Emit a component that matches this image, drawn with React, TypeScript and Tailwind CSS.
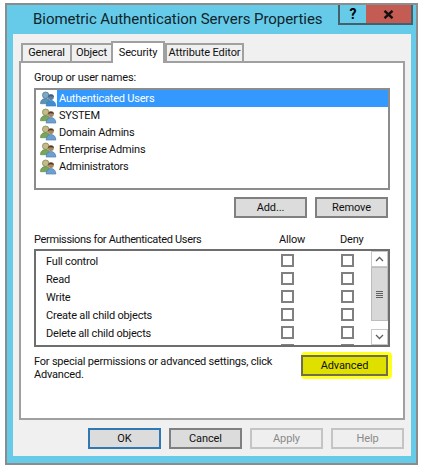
import React from "react";

const FONT = "font-['Roboto','Noto_Sans',sans-serif]";

function UsersIcon({ selected = false }: { selected?: boolean }) {
  const backBody = selected ? "#5b93b5" : "#79a65a";
  const backHead = selected ? "#7fa8c4" : "#c9b98a";
  const frontHead = selected ? "#5f7f9c" : "#a98763";
  const hair = selected ? "#3c5f80" : "#4a3a2c";
  return (
    <svg width="17" height="16" viewBox="0 0 18 16" className="shrink-0">
      <circle cx="6" cy="4" r="3.4" fill={backHead} stroke={selected ? "#4d7896" : "#6f8a4a"} strokeWidth="0.8" />
      <path d="M0.5 13 C0.5 9 3 7.6 6 7.6 C9 7.6 10.5 9 10.5 13 Z" fill={backBody} stroke={selected ? "#3f7294" : "#557f40"} strokeWidth="0.6" />
      <circle cx="11.5" cy="6" r="3.2" fill={frontHead} />
      <path d="M8.2 6 C8.2 2.6 14.8 2.4 14.9 6 C13 4.8 10 4.8 8.2 6 Z" fill={hair} />
      <path d="M6.5 15.5 C6.5 11.6 8.8 9.6 11.5 9.6 C14.4 9.6 16.8 11.6 16.8 15.5 Z" fill={selected ? "#3f8fd0" : "#6da0d2"} stroke={selected ? "#2f78b5" : "#44759f"} strokeWidth="0.6" />
    </svg>
  );
}

function Btn({
  children,
  w = "w-[73px]",
  h = "h-[21px]",
  tone = "normal",
}: {
  children: React.ReactNode;
  w?: string;
  h?: string;
  tone?: "normal" | "default" | "disabled";
}) {
  const cls =
    tone === "default"
      ? "border-[#2f78b4] bg-[#dcdcdc] text-[#111]"
      : tone === "disabled"
      ? "border-[#c4c4c4] bg-[#efefef] text-[#8a8a8a]"
      : "border-[#808080] bg-[#dcdcdc] text-[#111]";
  return (
    <div className={`${w} ${h} border-2 ${cls} flex items-center justify-center text-[11px] tracking-[-0.1px] leading-none`}>
      {children}
    </div>
  );
}

function Tab({ label, w, active }: { label: string; w: string; active?: boolean }) {
  return active ? (
    <div className={`${w} h-[22px] -mb-[2px] bg-white border-2 border-b-0 border-[#a0a0a0] flex items-start justify-center pt-[2px] text-[11px] tracking-[-0.1px] text-[#111] relative z-10 whitespace-nowrap`}>
      {label}
    </div>
  ) : (
    <div className={`${w} h-[18px] bg-[#f0f0f0] border-2 border-b-0 border-r-0 last:border-r-2 border-[#a0a0a0] flex items-center justify-center text-[11px] tracking-[-0.1px] text-[#111] whitespace-nowrap`}>
      {label}
    </div>
  );
}

const groups = ["Authenticated Users", "SYSTEM", "Domain Admins", "Enterprise Admins", "Administrators"];
const perms = ["Full control", "Read", "Write", "Create all child objects", "Delete all child objects", ""];

function Check() {
  return <div className="w-[13px] h-[13px] border-2 border-[#808080] bg-white shrink-0" />;
}

export default function App() {
  return (
    <div className={`w-[422px] h-[468px] bg-white overflow-hidden pt-[3px] pb-[3px] pl-[5px] pr-[4px] ${FONT}`}>
      <div className="h-full border-2 border-[#8c8c8c] bg-[#65cbe9] flex flex-col pl-[6px] pr-[5px] pb-[7px]">
        <div className="h-[29px] flex items-start shrink-0">
          <div className="flex-1 pl-[20px] pt-[3px] text-[15px] tracking-[-0.05px] leading-[22px] text-[#10242c] whitespace-nowrap">
            Biometric Authentication Servers Properties
          </div>
          <div className="flex h-[20px] mr-[-2px]">
            <div className="w-[28px] border-2 border-t-0 border-r-0 border-[#44606a] flex items-center justify-center text-[14px] font-bold leading-none text-black">
              ?
            </div>
            <div className="w-[47px] bg-[#c45c54] border-2 border-t-0 border-[#44606a] border-l-0 flex items-center justify-center">
              <svg width="11" height="9" viewBox="0 0 11 9">
                <path d="M1.5 0.8 L9.5 8.2 M9.5 0.8 L1.5 8.2" stroke="#111" strokeWidth="2.4" />
              </svg>
            </div>
          </div>
        </div>
        <div className="flex-1 min-h-0 bg-[#f0f0f0] flex flex-col px-[6px] pt-[7px]">
          <div className="flex items-end pl-[2px] h-[20px] shrink-0">
            <Tab label="General" w="w-[49px]" />
            <Tab label="Object" w="w-[41px]" />
            <Tab label="Security" w="w-[54px]" active />
            <Tab label="Attribute Editor" w="w-[79px]" />
          </div>
          <div className="h-[359px] shrink-0 bg-white border-2 border-[#a0a0a0] px-[13px] text-[11px] tracking-[-0.2px] text-[#111] flex flex-col">
            <div className="mt-[6px] h-[17px] leading-[17px] tracking-[-0.15px]">Group or user names:</div>
            <div className="mt-[2px] h-[102px] border-2 border-[#8c8c8c] flex flex-col pl-[4px] shrink-0">
              {groups.map((g, i) => (
                <div key={g} className="h-[17px] flex items-center">
                  <UsersIcon selected={i === 0} />
                  <div className={`h-[17px] leading-[17px] flex-1 pl-[2px] ${i === 0 ? "bg-[#3399ff] text-white" : ""}`}>{g}</div>
                </div>
              ))}
            </div>
            <div className="mt-[7px] flex justify-end gap-[8px] pr-[2px]">
              <Btn>Add...</Btn>
              <Btn>Remove</Btn>
            </div>
            <div className="mt-[13px] h-[17px] leading-[17px] flex">
              <div className="w-[245px] whitespace-nowrap tracking-[-0.34px]">Permissions for Authenticated Users</div>
              <div className="w-[61px]">Allow</div>
              <div>Deny</div>
            </div>
            <div className="mt-[1px] h-[98px] shrink-0 border-2 border-[#6e6e6e] flex overflow-hidden">
              <div className="flex-1 overflow-hidden flex flex-col pl-[10px]">
                {perms.map((p, i) => (
                  <div key={i} className="h-[18px] shrink-0 flex items-center">
                    <div className="w-[235px] leading-none pt-[2px]">{p}</div>
                    <div className="w-[60px] flex"><Check /></div>
                    <Check />
                  </div>
                ))}
              </div>
              <div className="w-[17px] shrink-0 flex flex-col">
                <div className="h-[16px] flex items-center justify-center border border-[#c8c8c8]">
                  <svg width="9" height="6" viewBox="0 0 9 6"><path d="M1 5 L4.5 1.5 L8 5" fill="none" stroke="#606060" strokeWidth="1.3" /></svg>
                </div>
                <div className="h-[54px] bg-[#d8d8d8] border border-[#bcbcbc] flex flex-col items-center justify-center gap-[1px]">
                  <div className="w-[7px] h-[1px] bg-[#606060]" />
                  <div className="w-[7px] h-[1px] bg-[#606060]" />
                  <div className="w-[7px] h-[1px] bg-[#606060]" />
                  <div className="w-[7px] h-[1px] bg-[#606060]" />
                </div>
                <div className="flex-1" />
                <div className="h-[16px] flex items-center justify-center border border-[#c8c8c8]">
                  <svg width="9" height="6" viewBox="0 0 9 6"><path d="M1 1 L4.5 4.5 L8 1" fill="none" stroke="#606060" strokeWidth="1.3" /></svg>
                </div>
              </div>
            </div>
            <div className="mt-[8px] flex items-start pr-[2px]">
              <div className="flex-1 leading-[13px] whitespace-nowrap">
                For special permissions or advanced settings, click
                <br />
                Advanced.
              </div>
              <div className="relative">
                <div className="absolute left-0 -top-[3px] -right-[4px] -bottom-[3px] rounded-[4px] bg-[#ffff20]" />
                <div className="relative w-[87px] h-[21px] border-2 border-[#6f6f4a] bg-[#e0e000] flex items-center justify-center text-[11px] tracking-[-0.1px] leading-none text-[#111]">
                  Advanced
                </div>
              </div>
            </div>
          </div>
          <div className="mt-[8px] flex justify-end gap-[8px] pr-[1px]">
            <Btn tone="default">OK</Btn>
            <Btn>Cancel</Btn>
            <Btn tone="disabled">Apply</Btn>
            <Btn tone="disabled">Help</Btn>
          </div>
        </div>
      </div>
    </div>
  );
}
